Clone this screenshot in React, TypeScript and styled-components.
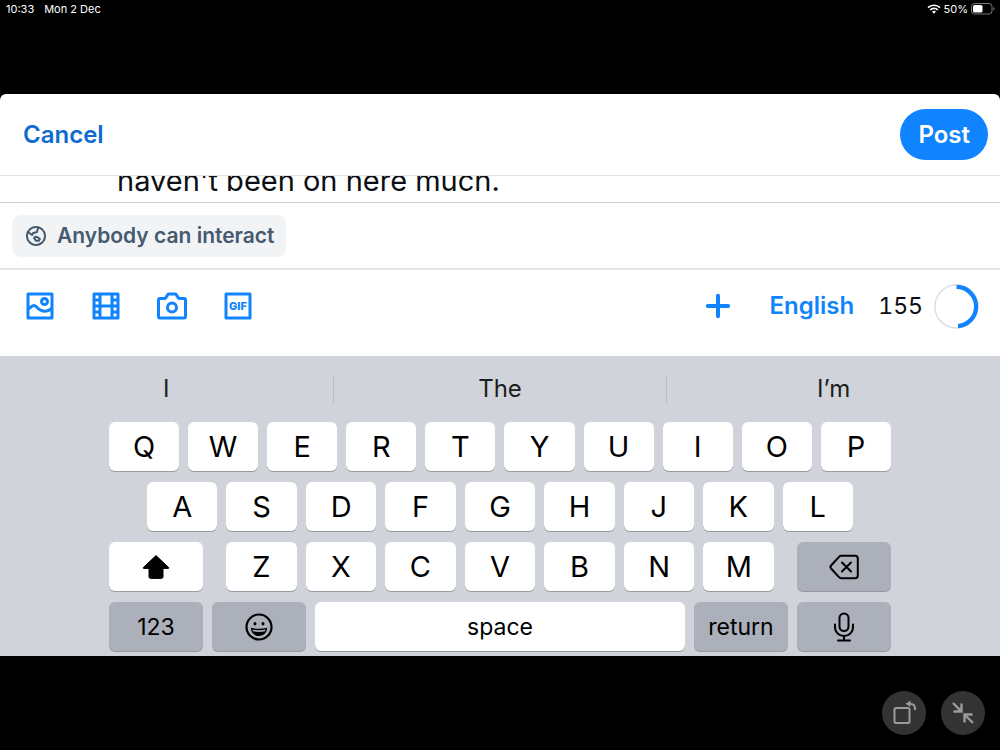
import React from 'react';
import styled, { createGlobalStyle } from 'styled-components';

const GlobalStyle = createGlobalStyle`
  * { box-sizing: border-box; }
  body {
    margin: 0;
    background: #000;
    font-family: Inter, "Liberation Sans", sans-serif;
  }
  button { font-family: inherit; border: 0; padding: 0; background: none; cursor: pointer; }
  svg { display: block; flex: none; }
`;

const Screen = styled.div`
  display: flex;
  flex-direction: column;
  min-height: 100vh;
  background: #000;
`;

const StatusBar = styled.div`
  display: flex;
  justify-content: space-between;
  height: 94px;
  padding: 1px 5px 1px 6px;
  font-size: 11px;
  line-height: 16px;
  color: #fff;
`;

const StatusGroup = styled.div<{ $gap: number }>`
  display: flex;
  align-items: center;
  gap: ${(p) => p.$gap}px;
  height: 16px;
`;

const Sheet = styled.main`
  display: flex;
  flex-direction: column;
  border-radius: 6px 6px 0 0;
  background: #fff;
  overflow: hidden;
`;

const Header = styled.header`
  display: flex;
  align-items: center;
  justify-content: space-between;
  height: 82px;
  padding: 0 12px 0 23px;
  border-bottom: 1px solid #dfe2e6;
`;

const CancelButton = styled.button`
  font-size: 24px;
  line-height: 32px;
  font-weight: 600;
  color: #0f6bd0;
`;

const PostButton = styled.button`
  height: 51px;
  padding: 0 18px;
  border-radius: 26px;
  background: #1083fe;
  font-size: 24px;
  line-height: 32px;
  font-weight: 600;
  color: #fff;
`;

const Editor = styled.div`
  display: flex;
  align-items: flex-end;
  height: 27px;
  padding: 0 24px 2px 117px;
  border-bottom: 1px solid #c9cdd2;
  overflow: hidden;
`;

const PostText = styled.textarea`
  flex: 1;
  height: 38px;
  margin: 0;
  padding: 0;
  border: 0;
  outline: 0;
  resize: none;
  overflow: hidden;
  background: transparent;
  font-family: inherit;
  font-size: 29px;
  line-height: 38px;
  color: #0b0f14;
`;

const InteractionRow = styled.div`
  display: flex;
  padding: 12px 12px 11px;
  border-bottom: 2px solid #e2e6ea;
`;

const InteractionButton = styled.button`
  display: flex;
  align-items: center;
  gap: 9px;
  height: 42px;
  padding: 0 12px;
  border-radius: 9px;
  background: #f1f3f5;
  font-size: 21px;
  line-height: 28px;
  font-weight: 600;
  color: #455a6f;
`;

const Toolbar = styled.div`
  display: flex;
  align-items: center;
  justify-content: space-between;
  height: 86px;
  padding: 0 21px 14px 22px;
  color: #1083fe;
`;

const MediaTools = styled.div`
  display: flex;
  gap: 30px;
`;

const PostTools = styled.div`
  display: flex;
  align-items: center;
`;

const IconButton = styled.button`
  color: #1083fe;
`;

const LanguageButton = styled.button`
  margin: 0 24px 0 34px;
  font-size: 24px;
  line-height: 32px;
  font-weight: 600;
  color: #1083fe;
`;

const CharCount = styled.span`
  margin-right: 11px;
  font-size: 23px;
  line-height: 32px;
  font-variant-numeric: tabular-nums;
  color: #0b0f14;
`;

const Keyboard = styled.section`
  display: flex;
  flex-direction: column;
  padding-bottom: 5px;
  background: #d0d3d9;
`;

const Suggestions = styled.div`
  display: flex;
  align-items: center;
  height: 66px;
`;

const Suggestion = styled.button`
  flex: 1;
  height: 28px;
  font-size: 24px;
  line-height: 28px;
  color: #1b1d20;

  & + & { border-left: 1px solid #b7bbc1; }
`;

const Keys = styled.div`
  display: flex;
  flex-direction: column;
  gap: 11px;
  padding: 0 109px;
`;

const KeyRow = styled.div<{ $inset?: number }>`
  display: flex;
  gap: 9px;
  padding: 0 ${(p) => p.$inset ?? 0}px;
`;

const LetterGroup = styled.div`
  display: flex;
  flex: 1;
  gap: 9px;
  margin: 0 14px;
`;

const Key = styled.button<{ $tone?: 'light' | 'dark'; $wide?: boolean; $label?: boolean }>`
  display: flex;
  align-items: center;
  justify-content: center;
  flex: ${(p) => (p.$wide ? '0 0 94px' : '1 1 0')};
  min-width: 0;
  height: 49px;
  border-radius: 6px;
  background: ${(p) => (p.$tone === 'dark' ? '#abb0bb' : '#fff')};
  box-shadow: 0 1px 0 #96999e;
  font-size: ${(p) => (p.$label ? 23 : 29)}px;
  line-height: 36px;
  color: #000;
`;

const FloatingActions = styled.div`
  display: flex;
  justify-content: flex-end;
  gap: 15px;
  margin-top: auto;
  padding: 0 15px;
  height: 59px;
`;

const RoundButton = styled.button`
  display: flex;
  align-items: center;
  justify-content: center;
  width: 44px;
  height: 44px;
  border-radius: 50%;
  background: #333;
  color: #9b9b9b;
`;

const ToolIcon = ({ d, size = 36 }: { d: string; size?: number }) => (
  <svg width={size} height={size} viewBox="0 0 24 24" fill="currentColor" aria-hidden="true">
    <path fillRule="evenodd" clipRule="evenodd" d={d} />
  </svg>
);

const IMAGE =
  'M3 4a1 1 0 0 1 1-1h16a1 1 0 0 1 1 1v16a1 1 0 0 1-1 1H4a1 1 0 0 1-1-1V4Zm2 1v7.213l1.246-.932.044-.03a3 3 0 0 1 3.863.454c1.468 1.58 2.941 2.749 4.847 2.749 1.703 0 2.855-.555 4-1.618V5H5Zm14 10.357c-1.112.697-2.386 1.097-4 1.097-2.81 0-4.796-1.755-6.313-3.388a1 1 0 0 0-1.269-.164L5 14.712V19h14v-3.643ZM15 8a1 1 0 1 0 0 2 1 1 0 0 0 0-2Zm-3 1a3 3 0 1 1 6 0 3 3 0 0 1-6 0Z';
const FILM =
  'M3 4a1 1 0 0 1 1-1h16a1 1 0 0 1 1 1v16a1 1 0 0 1-1 1H4a1 1 0 0 1-1-1V4Zm2 1v2h2V5H5Zm4 0v6h6V5H9Zm8 0v2h2V5h-2Zm2 4h-2v2h2V9Zm0 4h-2v2h2v-2Zm0 4h-2v2h2v-2Zm-4 2v-6H9v6h6Zm-8 0v-2H5v2h2Zm-2-4h2v-2H5v2Zm0-4h2V9H5v2Z';
const CAMERA =
  'M8.371 3.89A2 2 0 0 1 10.035 3h3.93a2 2 0 0 1 1.664.89L17.035 6H20a2 2 0 0 1 2 2v11a2 2 0 0 1-2 2H4a2 2 0 0 1-2-2V8a2 2 0 0 1 2-2h2.965L8.37 3.89ZM13.965 5h-3.93L8.63 7.11A2 2 0 0 1 6.965 8H4v11h16V8h-2.965a2 2 0 0 1-1.664-.89L13.965 5ZM12 11a2 2 0 1 0 0 4 2 2 0 0 0 0-4Zm-4 2a4 4 0 1 1 8 0 4 4 0 0 1-8 0Z';
const EARTH =
  'M4.4 9.493C4.14 10.28 4 11.124 4 12a8 8 0 1 0 10.899-7.459l-.953 3.81a1 1 0 0 1-.726.727l-3.444.866-.772 1.533a1 1 0 0 1-1.493.35L4.4 9.493Zm.883-1.84L7.756 9.51l.44-.874a1 1 0 0 1 .649-.52l3.306-.832.807-3.227a7.993 7.993 0 0 0-7.676 3.597ZM2 12C2 6.477 6.477 2 12 2s10 4.477 10 10-4.477 10-10 10S2 17.523 2 12Zm8.43.162a1 1 0 0 1 .77-.29l1.89.121a1 1 0 0 1 .494.168l2.869 1.928a1 1 0 0 1 .336 1.277l-.973 1.946a1 1 0 0 1-.894.553h-2.92a1 1 0 0 1-.831-.445L9.225 14.5a1 1 0 0 1 .126-1.262l1.08-1.076Zm.915 1.913.177-.177 1.171.074 1.914 1.286-.303.607h-1.766l-1.194-1.79Z';

const GifIcon = () => (
  <svg width="36" height="36" viewBox="0 0 36 36" aria-hidden="true">
    <rect x="6" y="6" width="24" height="24" fill="none" stroke="currentColor" strokeWidth="3" strokeLinejoin="round" />
    <text x="18" y="22" textAnchor="middle" fontSize="11" fontWeight="800" fill="currentColor">GIF</text>
  </svg>
);

const PlusIcon = () => (
  <svg width="36" height="36" viewBox="0 0 36 36" fill="none" stroke="currentColor" strokeWidth="4" strokeLinecap="round" aria-hidden="true">
    <path d="M18 7.800v20.400M7.800 18h20.400" />
  </svg>
);

const WifiIcon = () => (
  <svg width="14" height="10" viewBox="0 0 14 10" fill="none" stroke="#fff" strokeWidth="1.700" aria-hidden="true">
    <path d="M1 3.700a8.600 8.600 0 0 1 12 0M3.200 6a5.400 5.400 0 0 1 7.600 0" />
    <path d="M7 9.700 5 7.600a2.900 2.900 0 0 1 4 0Z" fill="#fff" stroke="none" />
  </svg>
);

const BatteryIcon = () => (
  <svg width="24" height="12" viewBox="0 0 24 12" aria-hidden="true">
    <rect x=".5" y=".5" width="20.500" height="10.500" rx="3" fill="none" stroke="#777" />
    <rect x="2" y="2" width="9.500" height="7.500" rx="1.500" fill="#fff" />
    <path d="M22.300 4v3.400c.8-.3 1.200-.9 1.200-1.700S23.100 4.300 22.300 4Z" fill="#777" />
  </svg>
);

const LIMIT = 300;
const remaining = 155;

const CountRing = () => {
  const length = 2 * Math.PI * 19.6;
  return (
    <svg width="45" height="45" viewBox="0 0 45 45" fill="none" aria-hidden="true">
      <circle cx="22.500" cy="22.500" r="21.600" stroke="#d5d9de" strokeWidth="1.200" />
      <circle
        cx="22.500"
        cy="22.500"
        r="19.600"
        stroke="#1083fe"
        strokeWidth="4.200"
        strokeDasharray={`${(length * (LIMIT - remaining)) / LIMIT} ${length}`}
        transform="rotate(-90 22.500 22.500)"
      />
    </svg>
  );
};

const ShiftIcon = () => (
  <svg width="28" height="26" viewBox="0 0 28 26" aria-hidden="true">
    <path d="M14 1.600 26.600 13.400c.4.400.2 1-.400 1H21v8.400a1.600 1.600 0 0 1-1.600 1.600H8.600A1.600 1.600 0 0 1 7 22.800v-8.400H1.800c-.600 0-.800-.600-.400-1Z" stroke="#000" strokeLinejoin="round" />
  </svg>
);

const DeleteIcon = () => (
  <svg width="30" height="26" viewBox="0 0 30 26" fill="none" stroke="#000" strokeWidth="2" strokeLinecap="round" strokeLinejoin="round" aria-hidden="true">
    <path d="M12.200 1.800H26a2.800 2.800 0 0 1 2.800 2.800v16.800a2.800 2.800 0 0 1-2.800 2.800H12.200a3 3 0 0 1-2.200-1L2.100 14.500a2.200 2.200 0 0 1 0-3L10 2.800a3 3 0 0 1 2.200-1Z" />
    <path d="m13 8.500 9 9M22 8.500l-9 9" />
  </svg>
);

const EmojiIcon = () => (
  <svg width="28" height="28" viewBox="0 0 28 28" aria-hidden="true">
    <circle cx="14" cy="14" r="12.500" fill="none" stroke="#000" strokeWidth="2.200" />
    <ellipse cx="10" cy="10.800" rx="1.500" ry="1.800" />
    <ellipse cx="18" cy="10.800" rx="1.500" ry="1.800" />
    <path d="M5.800 14.800c5.200 1.400 11.200 1.400 16.400 0-.200 5-3.600 8.200-8.200 8.200s-8-3.200-8.200-8.200Z" />
    <path d="M7.400 16.400c4.200 1.100 9 1.100 13.200 0l-.600 1.800c-3.800.9-8.200.9-12 0Z" fill="#abb0bb" />
  </svg>
);

const MicIcon = () => (
  <svg width="22" height="30" viewBox="0 0 22 30" fill="none" stroke="#000" strokeWidth="2" strokeLinecap="round" aria-hidden="true">
    <rect x="6.500" y="1.500" width="9" height="17.500" rx="4.500" />
    <path d="M2 12.500v3a9 8.500 0 0 0 18 0v-3M11 24v4.500M5 28.500h12" />
  </svg>
);

const RotateIcon = () => (
  <svg width="28" height="28" viewBox="0 0 28 28" fill="none" stroke="currentColor" strokeWidth="2" aria-hidden="true">
    <rect x="4.500" y="9" width="15" height="15" rx="1.500" />
    <path d="M18.500 4.800h1.500c3.200 0 5 2 5 5v1.200" />
    <path d="M15.500 4.800 20.500 1.500v6.600Z" fill="currentColor" stroke="none" />
  </svg>
);

const ShrinkIcon = () => (
  <svg width="24" height="24" viewBox="0 0 24 24" fill="none" stroke="currentColor" strokeWidth="2.400" aria-hidden="true">
    <path d="m2 2 8 8M10.500 2.500v8h-8M22 22l-8-8M13.500 21.500v-8h8" />
  </svg>
);

const letterKeys = (letters: string) => letters.split('').map((l) => <Key key={l}>{l}</Key>);

export default function App() {
  return (
    <Screen>
      <GlobalStyle />
      <StatusBar>
        <StatusGroup $gap={10}>
          <span>10:33</span>
          <span>Mon 2 Dec</span>
        </StatusGroup>
        <StatusGroup $gap={3}>
          <WifiIcon />
          <span>50%</span>
          <BatteryIcon />
        </StatusGroup>
      </StatusBar>

      <Sheet>
        <Header>
          <CancelButton>Cancel</CancelButton>
          <PostButton>Post</PostButton>
        </Header>
        <Editor>
          <PostText aria-label="Post text" rows={1} defaultValue="haven't been on here much." />
        </Editor>
        <InteractionRow>
          <InteractionButton>
            <ToolIcon d={EARTH} size={24} />
            Anybody can interact
          </InteractionButton>
        </InteractionRow>
        <Toolbar>
          <MediaTools>
            <IconButton aria-label="Add image"><ToolIcon d={IMAGE} /></IconButton>
            <IconButton aria-label="Add video"><ToolIcon d={FILM} /></IconButton>
            <IconButton aria-label="Open camera"><ToolIcon d={CAMERA} /></IconButton>
            <IconButton aria-label="Add GIF"><GifIcon /></IconButton>
          </MediaTools>
          <PostTools>
            <IconButton aria-label="Add another post"><PlusIcon /></IconButton>
            <LanguageButton>English</LanguageButton>
            <CharCount>{remaining}</CharCount>
            <CountRing />
          </PostTools>
        </Toolbar>

        <Keyboard aria-label="Keyboard">
          <Suggestions>
            <Suggestion>I</Suggestion>
            <Suggestion>The</Suggestion>
            <Suggestion>I’m</Suggestion>
          </Suggestions>
          <Keys>
            <KeyRow>{letterKeys('QWERTYUIOP')}</KeyRow>
            <KeyRow $inset={38}>{letterKeys('ASDFGHJKL')}</KeyRow>
            <KeyRow>
              <Key $wide aria-label="Shift"><ShiftIcon /></Key>
              <LetterGroup>{letterKeys('ZXCVBNM')}</LetterGroup>
              <Key $wide $tone="dark" aria-label="Delete"><DeleteIcon /></Key>
            </KeyRow>
            <KeyRow>
              <Key $wide $label $tone="dark">123</Key>
              <Key $wide $tone="dark" aria-label="Emoji"><EmojiIcon /></Key>
              <Key $label>space</Key>
              <Key $wide $label $tone="dark">return</Key>
              <Key $wide $tone="dark" aria-label="Dictate"><MicIcon /></Key>
            </KeyRow>
          </Keys>
        </Keyboard>
      </Sheet>

      <FloatingActions>
        <RoundButton aria-label="Rotate"><RotateIcon /></RoundButton>
        <RoundButton aria-label="Shrink"><ShrinkIcon /></RoundButton>
      </FloatingActions>
    </Screen>
  );
}
